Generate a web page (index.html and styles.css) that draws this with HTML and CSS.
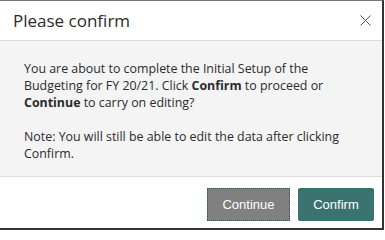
FILE: index.html
```html
<!DOCTYPE html>
<html>
<head>
<meta charset="utf-8">
<link rel="stylesheet" href="styles.css">
</head>
<body>
<div class="dialog">
  <div class="header">
    <span class="title">Please confirm</span>
    <svg class="close" width="11" height="11" viewBox="0 0 11 11"><path d="M0.5 0.5L10.5 10.5M10.5 0.5L0.5 10.5" stroke="#555" stroke-width="1" fill="none"/></svg>
  </div>
  <div class="content">
    <p>You are about to complete the Initial Setup of the Budgeting for FY 20/21. Click <b>Confirm</b> to proceed or <b>Continue</b> to carry on editing?</p>
    <p>Note: You will still be able to edit the data after clicking Confirm.</p>
  </div>
  <div class="footer">
    <button class="btn btn-continue">Continue</button>
    <button class="btn btn-confirm">Confirm</button>
  </div>
</div>
</body>
</html>
```
FILE: styles.css
```css
html, body {
  margin: 0;
  padding: 0;
  background: #fff;
}
.dialog {
  width: 382px;
  height: 227px;
  border-top: 1px solid #777;
  border-right: 2px solid #333;
  border-bottom: 2px solid #333;
  display: flex;
  flex-direction: column;
  font-family: "Open Sans", "Noto Sans", sans-serif;
  color: #2b2b2b;
}
.header {
  height: 39px;
  border-bottom: 1px solid #dcdcdc;
  display: flex;
  align-items: center;
  justify-content: space-between;
  padding: 0 11px 0 13px;
}
.title {
  font-size: 17px;
  color: #2b2b2b;
}
.close {
  display: block;
}
.content {
  background: #f4f4f4;
  border-bottom: 1px solid #dcdcdc;
  padding: 19px 24px 0 24px;
  box-sizing: border-box;
  height: 136px;
  font-size: 12.4px;
  line-height: 17px;
}
.content p {
  margin: 0 0 17px 0;
}
.content b {
  font-weight: 700;
}
.footer {
  flex: 1;
  display: flex;
  justify-content: flex-end;
  align-items: flex-start;
  gap: 8px;
  padding: 11px 8px 0 0;
}
.btn {
  height: 33px;
  border: none;
  border-radius: 2px;
  color: #fff;
  font-family: "Liberation Sans", Arial, sans-serif;
  font-size: 13px;
  padding: 0;
}
.btn-continue {
  width: 83px;
  background: #808080;
  outline: 1px dotted #1f4f4e;
  outline-offset: -1px;
  border-radius: 0;
}
.btn-confirm {
  width: 76px;
  background: #3a7270;
}
```
